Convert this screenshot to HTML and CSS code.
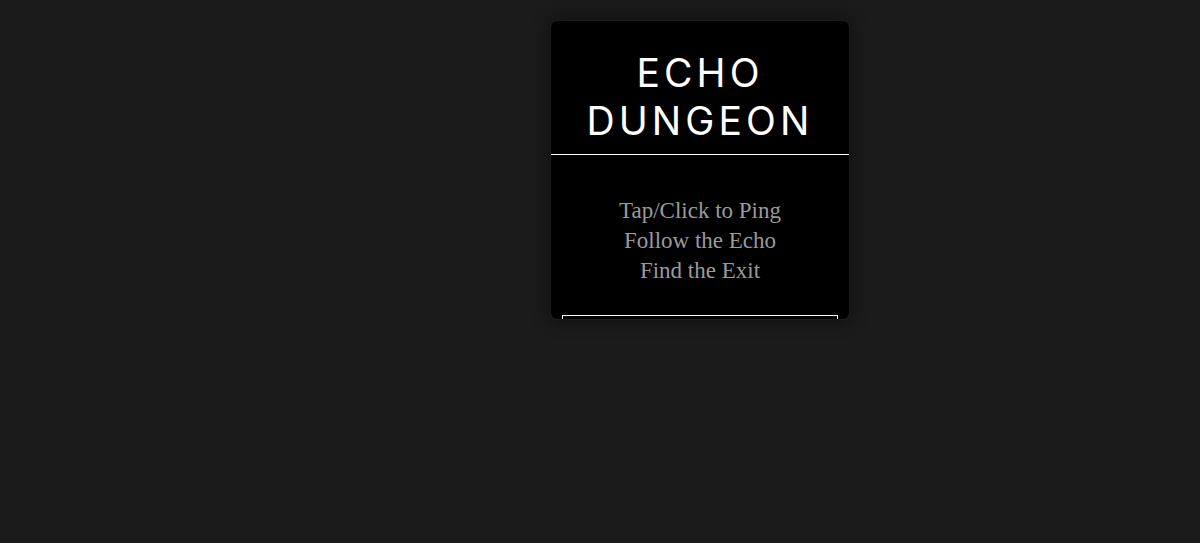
FILE: index.html
```html
<!DOCTYPE html>
<html lang="en">
<head>
    <meta charset="UTF-8">
    <title>Echo Dungeon</title>
    <link rel="stylesheet" href="styles.css">
</head>
<body>
    <div class="stage">
        <div class="card">
            <div class="title-box">
                <h1>ECHO<br>DUNGEON</h1>
            </div>
            <div class="rules">
                <p>Tap/Click to Ping</p>
                <p>Follow the Echo</p>
                <p>Find the Exit</p>
            </div>
            <div class="start-btn"></div>
        </div>
    </div>
</body>
</html>
```

FILE: styles.css
```css
body {
    margin: 0;
    background-color: #1b1b1b;
    height: 543px;
    overflow: hidden;
}

.stage {
    display: flex;
    justify-content: center;
    align-items: flex-start;
    padding-top: 21px;
    padding-left: 200px; /* card sits right of centre */
}

.card {
    width: 298px;
    height: 298px;
    background-color: #000;
    border-radius: 6px;
    box-shadow: 0 0 18px rgba(0, 0, 0, 0.6), 0 0 0 1px #262626;
    overflow: hidden;
    display: flex;
    flex-direction: column;
}

.title-box {
    border-bottom: 1px solid #fff;
    padding: 28px 0 9px;
}

h1 {
    margin: 0;
    text-align: center;
    color: #fff;
    font-family: Inter, "Noto Sans", sans-serif;
    font-weight: 400;
    font-size: 39px;
    line-height: 48px;
    letter-spacing: 0.105em;
}

.rules {
    padding: 41px 0 29px;
    text-align: center;
    font-family: "Liberation Serif", "DejaVu Serif", serif;
    font-size: 23px;
    line-height: 30px;
    color: #9a9a9a;
}

.rules p {
    margin: 0;
}

.start-btn {
    flex-shrink: 0;
    margin: 0 11px;
    height: 44px;
    border: 1px solid #fff;
}
```
